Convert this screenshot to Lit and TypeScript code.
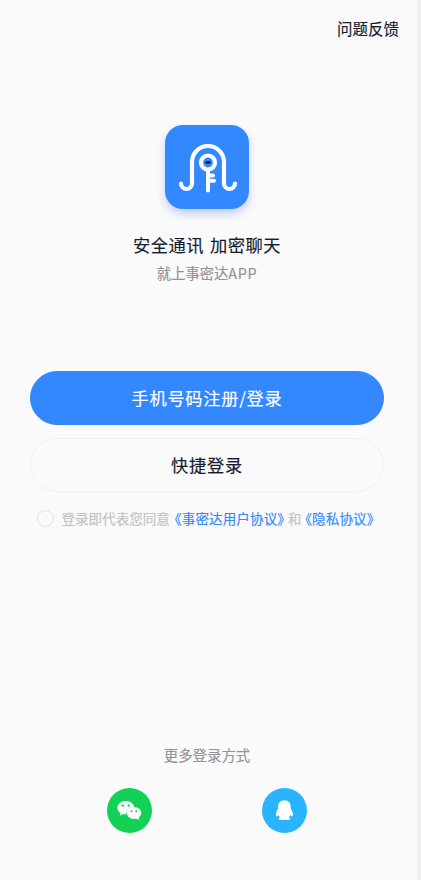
import { LitElement, html, css } from "lit";
import { customElement } from "lit/decorators.js";

@customElement("brand-logo")
class BrandLogo extends LitElement {
  static styles = css`
    :host { display: block; width: 84px; height: 84px; border-radius: 18px; background: #3388ff; box-shadow: 0 5px 9px rgba(70, 105, 255, 0.3); }
    svg { display: block; }
  `;
  render() {
    return html`<svg width="84" height="84" viewBox="0 0 84 84" fill="none" stroke="#fff" stroke-width="4.2" stroke-linecap="round" stroke-linejoin="round">
      <path d="M16 58.5A5.5 5.5 0 0 0 27 58.5V37A16 16 0 0 1 59 37V58.5A5.5 5.5 0 0 0 70 58.5" />
      <circle cx="43" cy="37.5" r="7" />
      <path d="M43 45V65.5M44 50.6H48M44 55.8H49" stroke-width="4" />
      <rect x="40.5" y="36.3" width="5" height="2.4" rx=".5" fill="#071b35" stroke="none" />
    </svg>`;
  }
}

@customElement("social-button")
class SocialButton extends LitElement {
  static properties = { kind: { type: String } };
  declare kind: string;
  static styles = css`
    :host { display: block; width: 45px; height: 45px; }
    svg { display: block; }
  `;
  render() {
    return this.kind === "wechat"
      ? html`<svg width="45" height="45" viewBox="0 0 45 45">
          <circle cx="22.5" cy="22.5" r="22.5" fill="#13d157" />
          <path fill="#fff" d="M18.8 12.9c-4.7 0-8.4 3-8.4 6.8 0 2.2 1.2 4 3.2 5.3l-.7 2.7 3.1-1.6c1 .3 2 .4 3.1.4.2-4.8 3.8-7.4 8.1-7.3-.6-3.6-4-6.3-8.4-6.3z" />
          <ellipse cx="27" cy="25" rx="7.3" ry="6" fill="#fff" />
          <path d="M28.5 30l3.8 2.1-.6-3.5z" fill="#fff" />
          <g fill="#13d157"><circle cx="15.9" cy="17.6" r="1.2" /><circle cx="21.7" cy="17.6" r="1.2" /><circle cx="24.5" cy="23.3" r=".95" /><circle cx="29.2" cy="23.3" r=".95" /></g>
        </svg>`
      : html`<svg width="45" height="45" viewBox="0 0 45 45">
          <circle cx="22.5" cy="22.5" r="22.5" fill="#28b4ff" />
          <path fill="#fff" d="M22.4 12.2c-4 0-6.3 2.8-6.3 6.6v1.8c-.8 1.7-2.1 3.7-2.1 5.8 0 1.3.5 2.2 1 2.1.5-.1 1-.8 1.5-1.5.3 1 .8 1.7 1.5 2.4-1 .4-1.4 1-1.3 1.7.1 1.1 3.8 1.2 5.7.4 1.9.8 5.8.7 5.9-.4.1-.7-.4-1.3-1.4-1.7.7-.7 1.2-1.5 1.5-2.4.5.7 1 1.4 1.5 1.5.5.1 1-.8 1-2.1 0-2.1-1.4-4.1-2.2-5.8v-1.8c0-3.8-2.3-6.6-6.3-6.6z" />
        </svg>`;
  }
}

@customElement("app-root")
class AppRoot extends LitElement {
  static styles = css`
    :host { display: block; height: 880px; background: #efefef; font-family: "Noto Sans CJK SC", sans-serif; color: #141c30; }
    * { box-sizing: border-box; }
    .screen { width: 417px; height: 880px; background: #fafafa; display: flex; flex-direction: column; white-space: nowrap; -webkit-text-stroke: 0.15px currentColor; }
    .top { height: 125px; padding: 17px 18px 0 0; text-align: right; font-size: 15.5px; line-height: 23px; }
    .hero { display: flex; flex-direction: column; align-items: center; height: 246px; padding-right: 3px; }
    h1 { margin: 23px 0 0; font-size: 17.3px; line-height: 26px; font-weight: 400; letter-spacing: 0.45px; word-spacing: 1.6px; }
    .sub { margin-top: 4px; font-size: 14.3px; line-height: 22px; color: #929294; }
    .latin { letter-spacing: 0.7px; }
    .actions { display: flex; flex-direction: column; gap: 13px; padding: 0 33px 0 30px; }
    button { height: 54px; padding: 0 0 2px; border-radius: 27px; font: 400 17.2px "Noto Sans CJK SC", sans-serif; letter-spacing: 0.75px; border: 1px solid #f0f0f1; background: #fafafa; color: #141c30; -webkit-text-stroke: 0.15px currentColor; }
    .primary { background: #3388ff; border-color: #3388ff; color: #fff; }
    .agree { display: flex; align-items: center; height: 20px; margin: 16px 0 0 37px; font-size: 13.55px; line-height: 20px; color: #c0c1c3; }
    .check { width: 17px; height: 17px; border: 1px solid #e0e1e3; border-radius: 50%; margin-right: 7.5px; }
    .link { color: #3388ff; font-feature-settings: "halt" 1; letter-spacing: 0.1px; margin-left: 5px; }
    .and { margin-left: 3.5px; }
    .and + .link { margin-left: 4px; }
    .more { display: flex; align-items: center; justify-content: center; gap: 18px; height: 20px; margin: 217px 3px 0 0; font-size: 14.4px; line-height: 20px; color: #929396; }
    .rule { width: 72px; height: 1px; background: #f3f3f3; }
    .social { display: flex; gap: 110px; margin: 23px 0 0 107px; }
  `;
  render() {
    return html`<main class="screen">
      <div class="top">问题反馈</div>
      <section class="hero">
        <brand-logo></brand-logo>
        <h1>安全通讯 加密聊天</h1>
        <div class="sub">就上事密达<span class="latin">APP</span></div>
      </section>
      <section class="actions">
        <button class="primary">手机号码注册/登录</button>
        <button>快捷登录</button>
      </section>
      <div class="agree">
        <span class="check"></span><span>登录即代表您同意</span><span class="link">《事密达用户协议》</span><span class="and">和</span><span class="link">《隐私协议》</span>
      </div>
      <div class="more"><span class="rule"></span><span>更多登录方式</span><span class="rule"></span></div>
      <div class="social"><social-button kind="wechat"></social-button><social-button kind="qq"></social-button></div>
    </main>`;
  }
}
